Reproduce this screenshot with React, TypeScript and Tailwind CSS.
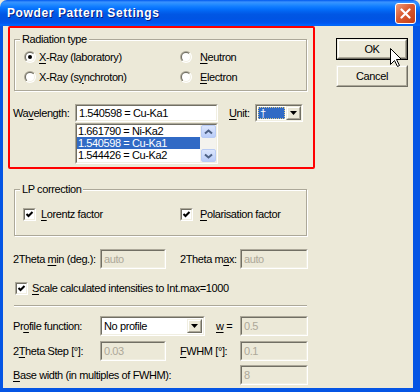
import React from "react";

const FONT = "font-['Liberation_Sans',Arial,sans-serif]";

function Sunken({
  className = "",
  innerClass = "",
  children,
}: {
  className?: string;
  innerClass?: string;
  children?: React.ReactNode;
}) {
  return (
    <div
      className={`border border-t-[#ACA899] border-l-[#ACA899] border-b-white border-r-white ${className}`}
    >
      <div
        className={`h-full w-full border border-t-[#716F64] border-l-[#716F64] border-b-[#F1EFE2] border-r-[#F1EFE2] ${innerClass}`}
      >
        {children}
      </div>
    </div>
  );
}

function DropButton() {
  return (
    <div className="w-[15px] h-full shrink-0 border border-t-[#F1EFE2] border-l-[#F1EFE2] border-b-[#716F64] border-r-[#716F64] bg-[#ECE9D8]">
      <div className="h-full border border-t-white border-l-white border-b-[#ACA899] border-r-[#ACA899] flex items-center justify-center">
        <svg width="7" height="4" viewBox="0 0 7 4">
          <polygon points="0,0 7,0 3.5,4" fill="#000" />
        </svg>
      </div>
    </div>
  );
}

function Edit({
  className,
  value,
  disabled,
}: {
  className: string;
  value: string;
  disabled?: boolean;
}) {
  return (
    <Sunken className={className} innerClass={disabled ? "bg-[#ECE9D8]" : "bg-white"}>
      <div
        className={`h-full flex items-center pl-[2px] ${disabled ? "text-[#ACA899]" : "text-black"}`}
      >
        {value}
      </div>
    </Sunken>
  );
}

function Radio({ checked }: { checked?: boolean }) {
  return (
    <svg width="12" height="12" viewBox="0 0 12 12" className="shrink-0">
      <defs>
        <linearGradient id="rgo" x1="0" y1="0" x2="1" y2="1">
          <stop offset="0.5" stopColor="#ACA899" />
          <stop offset="0.5" stopColor="#FFFFFF" />
        </linearGradient>
        <linearGradient id="rgi" x1="0" y1="0" x2="1" y2="1">
          <stop offset="0.5" stopColor="#716F64" />
          <stop offset="0.5" stopColor="#F1EFE2" />
        </linearGradient>
      </defs>
      <circle cx="6" cy="6" r="6" fill="url(#rgo)" />
      <circle cx="6" cy="6" r="5" fill="url(#rgi)" />
      <circle cx="6" cy="6" r="4" fill="#fff" />
      {checked && <circle cx="6" cy="6" r="2" fill="#000" />}
    </svg>
  );
}

function Check() {
  return (
    <Sunken className="w-[13px] h-[13px] shrink-0" innerClass="bg-white flex items-center justify-center">
      <svg width="9" height="9" viewBox="0 0 9 9">
        <polyline points="1.5,4 3.5,6 7.5,2" fill="none" stroke="#000" strokeWidth="2" />
      </svg>
    </Sunken>
  );
}

function U({ children }: { children: React.ReactNode }) {
  return <span className="underline decoration-1 underline-offset-[1.5px]">{children}</span>;
}

function ScrollBtn({ down }: { down?: boolean }) {
  return (
    <div className="h-[13px] w-[15px] rounded-[2px] border border-[#B9CCF5] bg-[linear-gradient(to_bottom,#DCE6FD,#BACDF8)] flex items-center justify-center">
      <svg width="9" height="6" viewBox="0 0 9 6">
        {down ? (
          <polyline points="1,1.5 4.5,4.5 8,1.5" fill="none" stroke="#4D6185" strokeWidth="2" />
        ) : (
          <polyline points="1,4.5 4.5,1.5 8,4.5" fill="none" stroke="#4D6185" strokeWidth="2" />
        )}
      </svg>
    </div>
  );
}

function Raised({ children, isDefault }: { children: React.ReactNode; isDefault?: boolean }) {
  const inner = (
    <div className="h-full border border-t-[#F1EFE2] border-l-[#F1EFE2] border-b-[#716F64] border-r-[#716F64]">
      <div className="h-full border border-t-white border-l-white border-b-[#ACA899] border-r-[#ACA899] flex items-center justify-center bg-[#ECE9D8]">
        {children}
      </div>
    </div>
  );
  return isDefault ? (
    <div className="w-[72px] h-[22px] border border-black">{inner}</div>
  ) : (
    <div className="w-[72px] h-[22px]">{inner}</div>
  );
}

export default function App() {
  return (
    <div
      className={`relative w-[420px] h-[392px] flex flex-col overflow-hidden bg-[#ECE9D8] text-[11px] tracking-[-0.4px] leading-[13px] text-black ${FONT}`}
    >
      {/* Title bar */}
      <div className="h-[26px] shrink-0 rounded-t-[7px] bg-[linear-gradient(to_bottom,#0058ee_0%,#3a93ff_8%,#288eff_15%,#127dff_25%,#036ffc_35%,#0262ee_45%,#0057e5_55%,#0054e3_70%,#0055eb_85%,#005bf5_92%,#026afe_96%,#0062ef_100%)] flex items-center justify-between pl-[7px] pr-[4px]">
        <span className="text-white font-bold text-[12px] tracking-[0.6px] [text-shadow:1px_1px_0_#0a1b7a]">
          Powder Pattern Settings
        </span>
        <div className="w-[21px] h-[21px] rounded-[3px] border border-white bg-[linear-gradient(135deg,#EE9C7C_0%,#DA5A30_45%,#C33F16_100%)] flex items-center justify-center">
          <svg width="11" height="11" viewBox="0 0 11 11">
            <path d="M1.5 1.5 L9.5 9.5 M9.5 1.5 L1.5 9.5" stroke="#fff" strokeWidth="2.2" strokeLinecap="round" />
          </svg>
        </div>
      </div>

      {/* Body */}
      <div className="flex-1 flex border-l-[3px] border-r-[7px] border-b-[4px] border-[#0555E4]">
        <div className="w-[306px] pl-[10px] flex flex-col">
          {/* Radiation type */}
          <fieldset className="mt-[7px] ml-[1px] w-[293px] border border-[#ACA899] shadow-[inset_1px_1px_0_#fff,1px_1px_0_#fff]">
            <legend className="ml-[5px] px-[2px] bg-[#ECE9D8] leading-[13px]">Radiation type</legend>
            <div className="pl-[9px] pt-[4px] pb-[6px] flex flex-col gap-[6px]">
              <div className="flex h-[14px] items-center">
                <div className="w-[156px] flex items-center">
                  <Radio checked />
                  <span className="ml-[3px]">
                    <U>X</U>-Ray (laboratory)
                  </span>
                </div>
                <div className="flex items-center">
                  <Radio />
                  <span className="ml-[8px]">
                    <U>N</U>eutron
                  </span>
                </div>
              </div>
              <div className="flex h-[14px] items-center">
                <div className="w-[156px] flex items-center">
                  <Radio />
                  <span className="ml-[3px]">
                    X-Ray (s<U>y</U>nchroton)
                  </span>
                </div>
                <div className="flex items-center">
                  <Radio />
                  <span className="ml-[8px]">
                    <U>E</U>lectron
                  </span>
                </div>
              </div>
            </div>
          </fieldset>

          {/* Wavelength */}
          <div className="mt-[13px] h-[18px] flex items-center">
            <span className="w-[62px]">
              Wa<U>v</U>elength:
            </span>
            <Edit className="w-[143px] h-[18px]" value="1.540598 = Cu-Ka1" />
            <span className="ml-[11px] w-[26px]">
              <U>U</U>nit:
            </span>
            <Sunken className="w-[48px] h-[18px]" innerClass="bg-white flex">
              <div className="flex-1 m-[1px] bg-[#316AC5] border border-dotted border-[#D9C98A] flex items-center pl-[1px] text-white">
                †
              </div>
              <DropButton />
            </Sunken>
          </div>

          {/* Listbox */}
          <Sunken className="mt-[1px] ml-[62px] w-[143px] h-[41px]" innerClass="bg-white flex">
            <div className="flex-1 flex flex-col pt-[0px]">
              <div className="h-[12px] flex items-center pl-[1px]">1.661790 = Ni-Ka2</div>
              <div className="h-[12px] flex items-center pl-[1px] bg-[#316AC5] text-white">1.540598 = Cu-Ka1</div>
              <div className="h-[12px] flex items-center pl-[1px]">1.544426 = Cu-Ka2</div>
            </div>
            <div className="w-[16px] bg-[#F4F3EE] flex flex-col justify-between items-center">
              <ScrollBtn />
              <ScrollBtn down />
            </div>
          </Sunken>

          {/* LP correction */}
          <fieldset className="mt-[19px] ml-[1px] w-[293px] border border-[#ACA899] shadow-[inset_1px_1px_0_#fff,1px_1px_0_#fff]">
            <legend className="ml-[5px] px-[2px] bg-[#ECE9D8] leading-[13px]">LP correction</legend>
            <div className="pl-[8px] pt-[5px] pb-[8px] flex items-center h-[26px] box-content">
              <div className="w-[157px] flex items-center">
                <Check />
                <span className="ml-[5px]">
                  <U>L</U>orentz factor
                </span>
              </div>
              <div className="flex items-center">
                <Check />
                <span className="ml-[7px]">
                  <U>P</U>olarisation factor
                </span>
              </div>
            </div>
          </fieldset>

          {/* 2Theta min/max */}
          <div className="mt-[13px] h-[20px] flex items-center">
            <span className="w-[87px]">
              2Theta <U>m</U>in (deg.):
            </span>
            <Edit className="w-[66px] h-[20px]" value="auto" disabled />
            <span className="ml-[14px] w-[60px]">
              2Theta m<U>a</U>x:
            </span>
            <Edit className="w-[68px] h-[20px]" value="auto" disabled />
          </div>

          {/* Scale */}
          <div className="mt-[13px] h-[13px] flex items-center pl-[2px]">
            <Check />
            <span className="ml-[4px]">
              <U>S</U>cale calculated intensities to Int.max=1000
            </span>
          </div>

          {/* Separator */}
          <div className="mt-[10px] ml-[1px] w-[293px] h-[2px] border-t border-t-[#ACA899] border-b border-b-white" />

          {/* Profile function */}
          <div className="mt-[9px] h-[20px] flex items-center">
            <span className="w-[87px]">
              Pr<U>o</U>file function:
            </span>
            <Sunken className="w-[105px] h-[20px]" innerClass="bg-white flex items-stretch">
              <div className="flex-1 flex items-center pl-[2px]">No profile</div>
              <div className="py-[1px] pr-[1px] flex">
                <DropButton />
              </div>
            </Sunken>
            <span className="ml-[11px] w-[24px]">
              <U>w</U> =
            </span>
            <Edit className="w-[68px] h-[20px]" value="0.5" disabled />
          </div>

          {/* 2Theta Step */}
          <div className="mt-[5px] h-[20px] flex items-center">
            <span className="w-[87px]">
              2<U>T</U>heta Step [°]:
            </span>
            <Edit className="w-[66px] h-[20px]" value="0.03" disabled />
            <span className="ml-[14px] w-[60px]">
              <U>F</U>WHM [°]:
            </span>
            <Edit className="w-[68px] h-[20px]" value="0.1" disabled />
          </div>

          {/* Base width */}
          <div className="mt-[4px] h-[20px] flex items-center">
            <span className="w-[227px]">
              <U>B</U>ase width (in multiples of FWHM):
            </span>
            <Edit className="w-[68px] h-[20px]" value="8" disabled />
          </div>
        </div>

        {/* Buttons */}
        <div className="ml-[27px] mt-[12px] flex flex-col gap-[5px]">
          <Raised isDefault>OK</Raised>
          <Raised>Cancel</Raised>
        </div>
      </div>

      {/* Red annotation box */}
      <div className="absolute left-[8px] top-[26px] w-[307px] h-[143px] border-2 border-[#FF0000] rounded-[2px] pointer-events-none" />

      {/* Mouse cursor */}
      <svg
        className="absolute left-[390px] top-[48px]"
        width="13"
        height="20"
        viewBox="0 0 13 20"
      >
        <path
          d="M0.5 0.5 V16.5 L4.5 12.5 L7.5 18.5 L9.5 17.5 L6.5 11.5 H11.5 Z"
          fill="#fff"
          stroke="#000"
          strokeWidth="1"
          strokeLinejoin="miter"
        />
      </svg>
    </div>
  );
}
